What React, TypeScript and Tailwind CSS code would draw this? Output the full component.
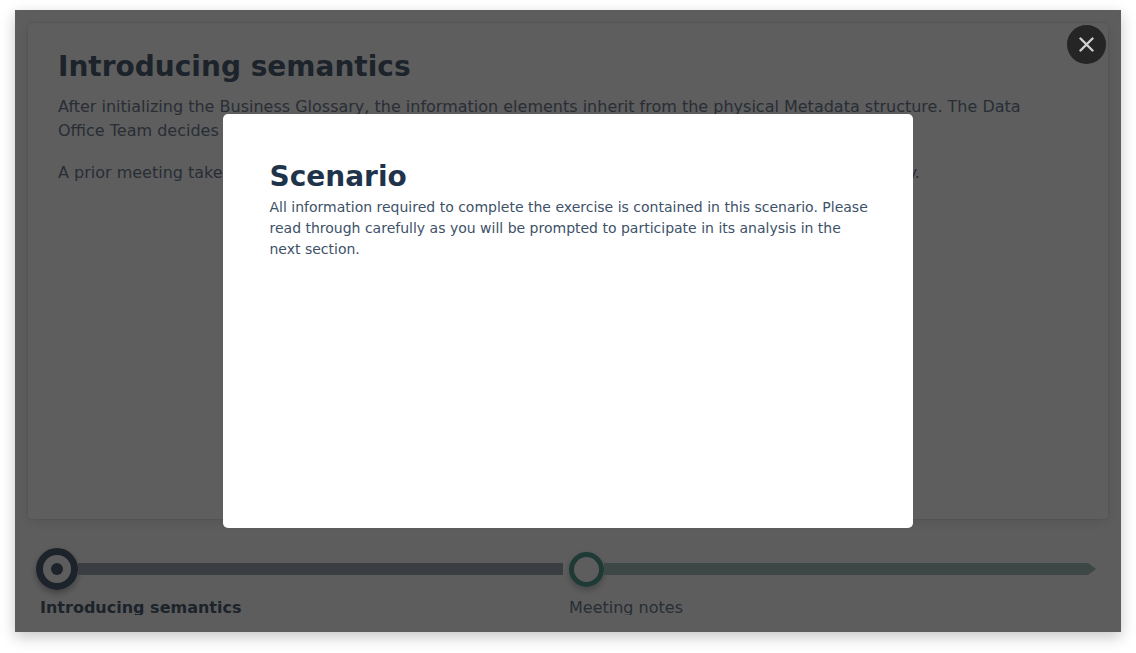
export default function App() {
  return (
    <div className="px-[15px] pt-2.5 pb-5 bg-white font-['Verdana','DejaVu_Sans',sans-serif]">
      <main className="relative bg-[#fcfcfc] px-[13px] pt-[13px] pb-[17px] shadow-[0_5px_14px_rgba(0,0,0,0.22)]">
        <section className="min-h-[496px] rounded-sm bg-white px-[30px] pt-[26px] shadow-[0_0_0_1px_rgba(0,0,0,0.05),0_3px_12px_rgba(0,0,0,0.1)]">
          <h1 className="text-[28px] leading-9 font-bold text-[#4e6073]">Introducing semantics</h1>
          <div className="mt-2.5 space-y-[18px] text-base leading-6 text-[#6f7c90]">
            <p>
              After initializing the Business Glossary, the information elements inherit from the physical Metadata
              structure. The Data
              <br />
              Office Team decides to add meaning to these elements.
            </p>
            <p>
              A prior meeting takes place in which the office team discusses the semantics of the new Business Glossary.
            </p>
          </div>
        </section>

        <ol className="mt-[29px] grid grid-cols-2 gap-x-0.5 px-3">
          <li>
            <div className="-ml-1 mr-1 flex h-[42px] items-center">
              <span className="grid size-[42px] place-items-center rounded-full border-7 border-[#4e6073] shadow-[0_3px_6px_rgba(0,0,0,0.3)]">
                <span className="size-3 rounded-full bg-[#4e6073]" />
              </span>
              <span className="h-3 flex-1 bg-[#9da5b2]" />
            </div>
            <p className="mt-2 h-[17px] overflow-hidden text-base leading-[19px] font-bold text-[#4e6073]">
              Introducing semantics
            </p>
          </li>
          <li>
            <div className="flex h-[42px] items-center">
              <span className="size-[35px] rounded-full border-5 border-[#549d8f] shadow-[0_3px_6px_rgba(0,0,0,0.25)]" />
              <span className="h-3 flex-1 bg-[#a5c0bd] [clip-path:polygon(0_0,calc(100%-8px)_0,100%_50%,calc(100%-8px)_100%,0_100%)]" />
            </div>
            <p className="mt-2 h-[17px] overflow-hidden text-base leading-[19px] text-[#6f7c90]">Meeting notes</p>
          </li>
        </ol>

        <div className="absolute inset-0 grid place-items-center bg-black/63">
          <section
            role="dialog"
            aria-modal="true"
            aria-labelledby="scenario-title"
            className="h-2/3 w-[62.3%] rounded-[5px] bg-white pt-[45px] pr-[42px] pl-[46px]"
          >
            <h2 id="scenario-title" className="text-[28px] leading-9 font-bold text-[#1f344b]">
              Scenario
            </h2>
            <p className="mt-0.5 text-sm leading-[21px] text-[#3d5168]">
              All information required to complete the exercise is contained in this scenario. Please read through
              carefully as you will be prompted to participate in its analysis in the next section.
            </p>
          </section>
          <button
            type="button"
            aria-label="Close"
            className="absolute top-[15px] right-[15px] grid size-[39px] place-items-center rounded-full bg-[#252525] text-[#d0d0d0]"
          >
            <svg viewBox="0 0 15 15" className="size-[15px]" fill="none" stroke="currentColor" strokeWidth="2.4" strokeLinecap="round">
              <path d="M1.5 1.5 13.5 13.5M13.5 1.5 1.5 13.5" />
            </svg>
          </button>
        </div>
      </main>
    </div>
  );
}
